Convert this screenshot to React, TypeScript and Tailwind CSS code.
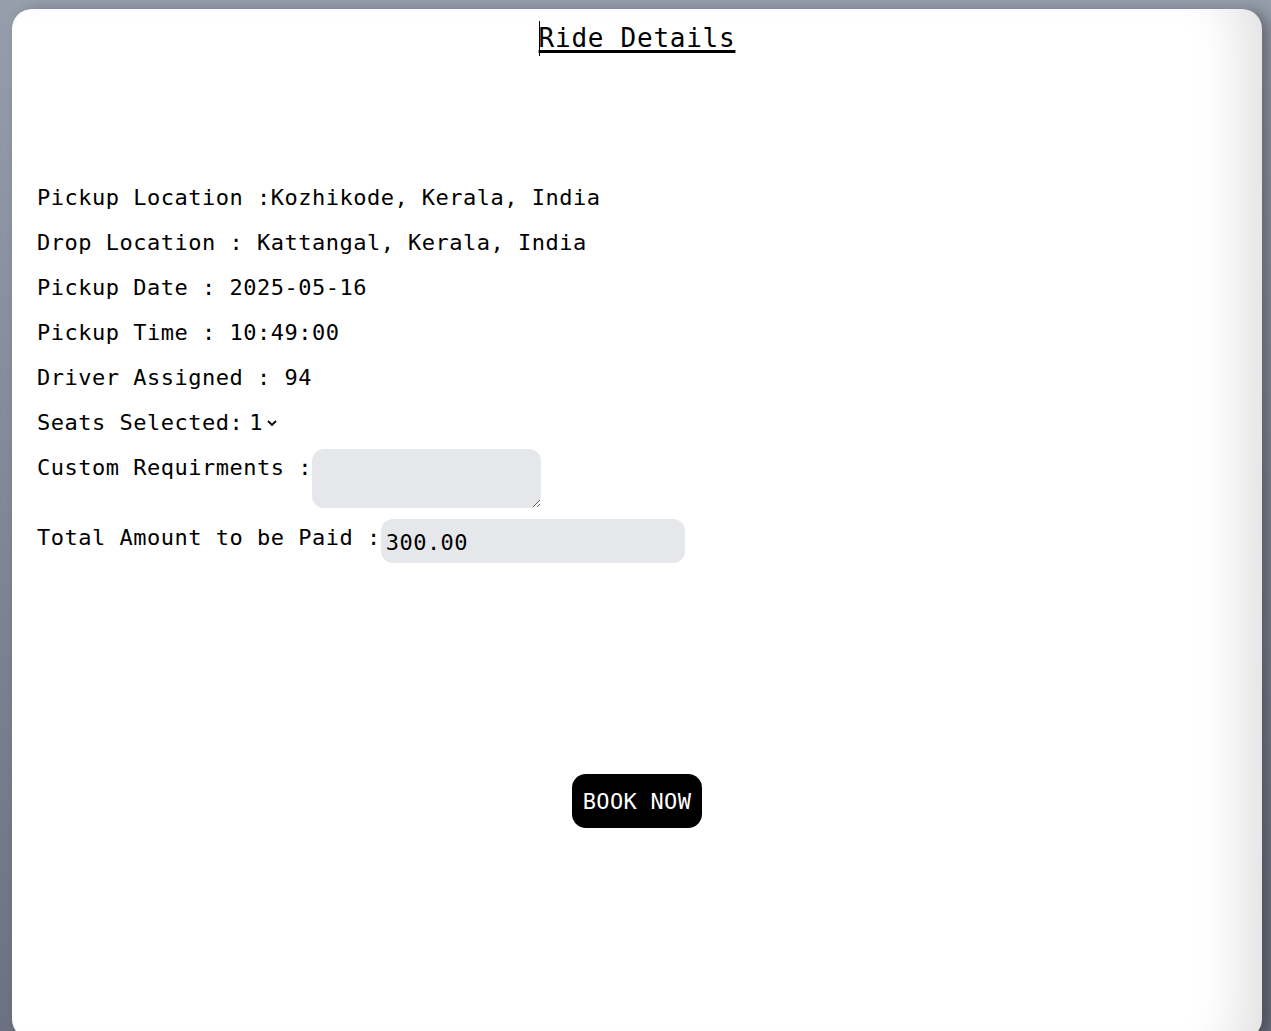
import React from "react";

const rows: [string, string][] = [
  ["Pickup Location :", "Kozhikode, Kerala, India"],
  ["Drop Location : ", "Kattangal, Kerala, India"],
  ["Pickup Date : ", "2025-05-16"],
  ["Pickup Time : ", "10:49:00"],
  ["Driver Assigned : ", "94"],
];

export default function App() {
  return (
    <div className="min-h-screen bg-gradient-to-b from-[#969dab] to-[#6b7180] pl-3 pr-[9px] pt-[9px] font-['DejaVu_Sans_Mono',monospace] text-black">
      <div className="h-[1030px] rounded-[20px] bg-white shadow-[inset_-50px_0_50px_-30px_rgba(0,0,0,0.12),8px_2px_14px_rgba(0,0,0,0.3)] pt-[12px]">
        <div className="flex justify-center">
          <h1 className="relative text-[26px] leading-[35px] tracking-[0.75px] underline decoration-[3px] underline-offset-[3px]">
            <span className="absolute left-0 top-0 h-full w-px bg-black" />
            Ride Details
          </h1>
        </div>

        <div className="mt-[119px] pl-[25px] text-[22px] tracking-[0.5px]">
          {rows.map(([label, value]) => (
            <div key={label} className="leading-[45px] whitespace-pre">
              {label}
              {value}
            </div>
          ))}
          <div className="flex items-center leading-[45px] whitespace-pre">
            <span>Seats Selected:</span>
            <span className="ml-[6px]">1</span>
            <svg className="ml-[3px] mt-[1px]" width="12" height="12" viewBox="0 0 12 12">
              <path d="M2 4l4 4 4-4" fill="none" stroke="black" strokeWidth="1.8" />
            </svg>
          </div>
          <div className="mt-[4px] flex items-start">
            <span className="leading-[37px] whitespace-pre">Custom Requirments :</span>
            <textarea className="h-[59px] w-[229px] resize rounded-[12px] bg-[#e5e7eb] outline-none" />
          </div>
          <div className="mt-[11px] flex items-start">
            <span className="leading-[37px] whitespace-pre">Total Amount to be Paid :</span>
            <input
              readOnly
              value="300.00"
              className="h-[44px] w-[304px] rounded-[12px] bg-[#e5e7eb] pl-[5px] pt-[3px] text-[22px] tracking-[0.5px] outline-none"
            />
          </div>
        </div>

        <div className="mt-[211px] flex justify-center">
          <button className="h-[54px] w-[130px] rounded-[14px] bg-black text-[22px] tracking-[0.3px] text-white">
            BOOK NOW
          </button>
        </div>
      </div>
    </div>
  );
}
